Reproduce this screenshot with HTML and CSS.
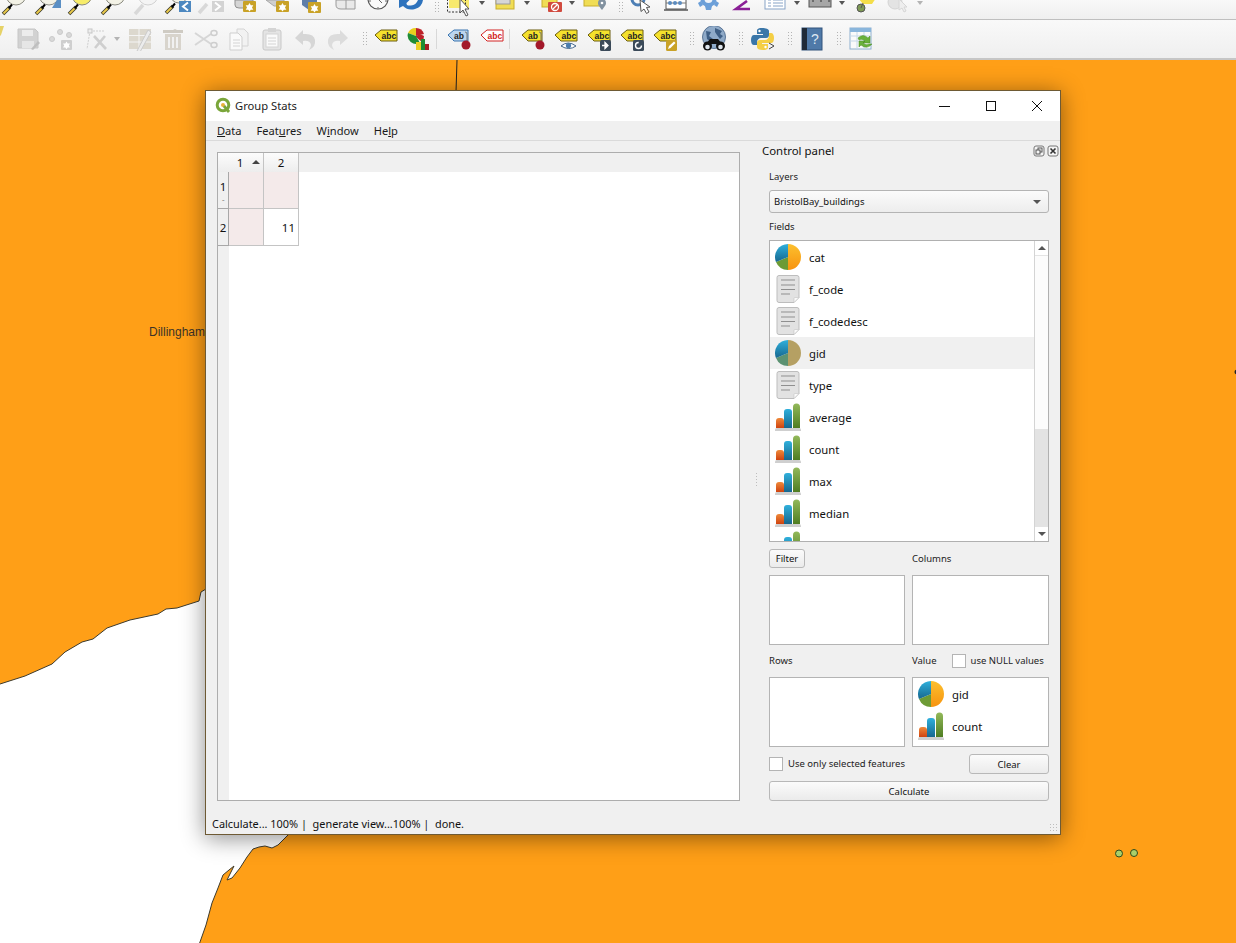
FILE: index.html
```html
<!DOCTYPE html>
<html lang="en">
<head>
  <meta charset="utf-8" />
  <title>Group Stats</title>
  <link rel="stylesheet" href="styles.css">
</head>
<body>
  <svg class="sprite" xmlns="http://www.w3.org/2000/svg">
    <defs>
      <linearGradient id="g-orange" x1="0" y1="0" x2="0" y2="1"><stop offset="0" stop-color="#fcc02e"/><stop offset="1" stop-color="#f7930f"/></linearGradient>
      <linearGradient id="g-blue" x1="0" y1="0" x2="0" y2="1"><stop offset="0" stop-color="#2fb0dc"/><stop offset="1" stop-color="#17678f"/></linearGradient>
      <linearGradient id="g-green" x1="0" y1="0" x2="0" y2="1"><stop offset="0" stop-color="#93b95a"/><stop offset="1" stop-color="#4f7d22"/></linearGradient>
      <linearGradient id="g-red" x1="0" y1="0" x2="0" y2="1"><stop offset="0" stop-color="#ef8a3a"/><stop offset="1" stop-color="#cf4310"/></linearGradient>
    </defs>

    <!-- field icons -->
    <symbol id="f-pie" viewBox="0 0 26 26">
      <path d="M13 0a13 13 0 0 1 0 26z" fill="url(#g-orange)"/>
      <path d="M13 13v13A13 13 0 0 1 1 18z" fill="#6d9b35"/>
      <path d="M13 13L1 18A13 13 0 0 1 13 0z" fill="url(#g-blue)"/>
    </symbol>
    <symbol id="f-pie-dim" viewBox="0 0 26 26">
      <path d="M13 0a13 13 0 0 1 0 26z" fill="#b5a063"/>
      <path d="M13 13v13A13 13 0 0 1 1 18z" fill="#5c9272"/>
      <path d="M13 13L1 18A13 13 0 0 1 13 0z" fill="url(#g-blue)"/>
    </symbol>
    <symbol id="f-doc" viewBox="0 0 26 28">
      <path d="M4 .5h18a2 2 0 0 1 2 2v20l-5 5H4a2 2 0 0 1-2-2v-23a2 2 0 0 1 2-2z" fill="#e2e2e2" stroke="#bdbdbd"/>
      <path d="M19 27.500v-4a1 1 0 0 1 1-1h4z" fill="#fafafa" stroke="#c4c4c4" stroke-width=".6"/>
      <path d="M6 5h14M6 10h14M6 14.500h14M6 19h9" stroke="#8f8f8f" stroke-width="1"/>
    </symbol>
    <symbol id="f-bars" viewBox="0 0 26 28">
      <path d="M0 27a2 2 0 0 1 2-2h22a2 2 0 0 1 2 2v1H0z" fill="#cfcfcf"/>
      <path d="M1 25v-7a3 3 0 0 1 3-3h2a3 3 0 0 1 3 3v7z" fill="url(#g-red)"/>
      <path d="M9 25V9a3 3 0 0 1 3-3h2a3 3 0 0 1 3 3v16z" fill="url(#g-blue)"/>
      <path d="M18 25V4a3.500 3.500 0 0 1 7 0v21z" fill="url(#g-green)"/>
    </symbol>

    <!-- first toolbar, only the bottom of each icon is on screen -->
    <symbol id="a-lens" viewBox="0 0 33 19">
      <circle cx="18" cy="-5" r="10" fill="#f3f2e6" stroke="#8a8a80"/>
      <path d="M5 14l7-7" stroke="#3a3a2a" stroke-width="3.500"/><path d="M5.500 13.500l5-5" stroke="#e9c94c" stroke-width="2"/>
      <path d="M11 8l3-3.500" stroke="#000" stroke-width="2"/>
    </symbol>
    <symbol id="a-lens-y" viewBox="0 0 33 19">
      <circle cx="18" cy="-5" r="10" fill="#f7ec6a" stroke="#8a8a80"/>
      <path d="M5 14l7-7" stroke="#3a3a2a" stroke-width="3.500"/><path d="M5.500 13.500l5-5" stroke="#e9c94c" stroke-width="2"/>
      <path d="M11 8l3-3.500" stroke="#000" stroke-width="2"/>
    </symbol>
    <symbol id="a-lens-box" viewBox="0 0 33 19">
      <circle cx="18" cy="-5" r="10" fill="#f3f2e6" stroke="#8a8a80"/>
      <path d="M5 14l7-7" stroke="#3a3a2a" stroke-width="3.500"/><path d="M5.500 13.500l5-5" stroke="#e9c94c" stroke-width="2"/>
      <path d="M11 8l3-3.500" stroke="#000" stroke-width="2"/>
      <path d="M21 8l5-8h4v8z" fill="#5b8fc4"/>
    </symbol>
    <symbol id="a-lens-off" viewBox="0 0 33 19">
      <circle cx="18" cy="-5" r="10" fill="#f4f4f4" stroke="#d2d2d2"/>
      <path d="M5 14l8-9" stroke="#d8d8d8" stroke-width="3.500"/>
    </symbol>
    <symbol id="a-lens-prev" viewBox="0 0 33 19">
      <circle cx="16" cy="-6" r="9" fill="#f3f2e6" stroke="#8a8a80"/>
      <path d="M3 13l7-7" stroke="#3a3a2a" stroke-width="3.500"/><path d="M3.500 12.500l5-5" stroke="#e9c94c" stroke-width="2"/>
      <path d="M9 7l3-3.500" stroke="#000" stroke-width="2"/>
      <rect x="16" y="1" width="12" height="11" fill="#4d88c0"/>
      <path d="M25 2.500l-5 4 5 4" fill="none" stroke="#fff" stroke-width="2"/>
    </symbol>
    <symbol id="a-lens-next" viewBox="0 0 33 19">
      <path d="M3 13l8-9" stroke="#d8d8d8" stroke-width="3.500"/>
      <rect x="16" y="1" width="12" height="11" fill="#d3d3d3"/>
      <path d="M19 2.500l5 4-5 4" fill="none" stroke="#fff" stroke-width="2"/>
    </symbol>
    <symbol id="a-sheet-star" viewBox="0 0 33 19">
      <path d="M6 0v5q0 3 4 3h14V0z" fill="#d5d5d5" stroke="#8f8f8f"/>
      <rect x="14" y="1" width="13" height="11" rx="1" fill="#c9a227"/>
      <path d="M20.500 3l1.300 2.300h2.500l-1.300 2.200 1.300 2.200h-2.500l-1.300 1.800-1.300-1.800h-2.500l1.300-2.200-1.300-2.200h2.500z" fill="#fff"/>
    </symbol>
    <symbol id="a-map-star" viewBox="0 0 33 19">
      <path d="M4 0l8 6h10V0z" fill="#cfcfcf" stroke="#a8a8a8"/>
      <rect x="14" y="1" width="13" height="11" rx="1" fill="#c9a227"/>
      <path d="M20.500 3l1.300 2.300h2.500l-1.300 2.200 1.300 2.200h-2.500l-1.300 1.800-1.300-1.800h-2.500l1.300-2.200-1.300-2.200h2.500z" fill="#fff"/>
    </symbol>
    <symbol id="a-blue-star" viewBox="0 0 33 19">
      <path d="M7 0v5l7 5 8-2V0z" fill="#5f7ea8"/>
      <rect x="13" y="2" width="13" height="11" rx="1" fill="#c9a227"/>
      <path d="M19.500 4l1.300 2.300h2.500l-1.300 2.200 1.300 2.200h-2.500l-1.300 1.800-1.300-1.800h-2.500l1.300-2.200-1.300-2.200h2.500z" fill="#fff"/>
    </symbol>
    <symbol id="a-scroll" viewBox="0 0 33 19">
      <path d="M8 0v5q0 4 5 4h14V0z" fill="#e9e9e9" stroke="#9a9a9a"/><path d="M18 0v9" stroke="#9a9a9a"/>
    </symbol>
    <symbol id="a-clock" viewBox="0 0 33 19">
      <circle cx="17" cy="-1" r="10" fill="#fafafa" stroke="#555" stroke-width="1.200"/>
      <path d="M17 -1l4 4M8 1l2 0M24 1l2 0M17 7v1.500" stroke="#666"/>
    </symbol>
    <symbol id="a-refresh" viewBox="0 0 33 19">
      <path d="M5 0v8l4-2q5 5 12 3t8-9h-5q-2 5-7 5.500t-4.500-2.500l3-3z" fill="#2e73bd"/>
    </symbol>
    <symbol id="a-select" viewBox="0 0 33 19">
      <rect x="6" y="-6" width="20" height="14" fill="#f7e96e"/><rect x="4.500" y="-4" width="18" height="16" fill="none" stroke="#333" stroke-dasharray="2 1.500"/>
      <path d="M17 -1l9 10-4 0 3 6-2 1-3-6-3 3z" fill="#fff" stroke="#555"/>
    </symbol>
    <symbol id="a-select-form" viewBox="0 0 33 19">
      <rect x="8" y="-6" width="18" height="15" fill="#f0dd55" stroke="#c8ad2c"/>
      <rect x="8" y="-3" width="14" height="7" fill="#d6d6d6" stroke="#9a9a9a"/>
    </symbol>
    <symbol id="a-select-no" viewBox="0 0 33 19">
      <rect x="9" y="-5" width="15" height="12" fill="#f0dd55" stroke="#c8ad2c"/>
      <rect x="15" y="2" width="14" height="10" rx="1" fill="#d14a3e"/>
      <circle cx="22" cy="7" r="3.500" fill="none" stroke="#fff" stroke-width="1.300"/><path d="M19.500 9.500l5-5" stroke="#fff" stroke-width="1.300"/>
    </symbol>
    <symbol id="a-select-pin" viewBox="0 0 33 19">
      <rect x="6" y="-6" width="18" height="12" fill="#f0dd55" stroke="#c8ad2c"/>
      <path d="M24 10c-3-4-4-5-4-7a4 4 0 0 1 8 0c0 2-1 3-4 7z" fill="#8292a0"/><circle cx="24" cy="3" r="1.300" fill="#fff"/>
    </symbol>
    <symbol id="a-identify" viewBox="0 0 33 19">
      <circle cx="12" cy="-1" r="6" fill="none" stroke="#4d7fb5" stroke-width="3"/>
      <path d="M14 0l10 7-3.500 .5 2.500 4.500-2.500 1.500-2.500-4.500-3 2.500z" fill="#fff" stroke="#555"/>
    </symbol>
    <symbol id="a-abacus" viewBox="0 0 33 19">
      <path d="M7 -6h20v15H7z" fill="#fff" stroke="#555"/><path d="M5 10h24" stroke="#555" stroke-width="1.500"/>
      <path d="M7 3h20" stroke="#777"/>
      <g fill="#5b8cc0"><circle cx="11" cy="3" r="2"/><circle cx="16" cy="3" r="2"/><circle cx="21" cy="3" r="2"/></g>
    </symbol>
    <symbol id="a-gear" viewBox="0 0 33 19">
      <circle cx="16.500" cy="-1" r="8" fill="#6b9fd8"/>
      <path d="M6 3l3-2 2 4-3 2zM27 3l-3-2-2 4 3 2zM13 6h7l-1 4h-5z" fill="#6b9fd8"/>
      <circle cx="16.500" cy="-1" r="4" fill="#eef3f9"/>
    </symbol>
    <symbol id="a-sigma" viewBox="0 0 33 19">
      <path d="M22 1L11 9h14" fill="none" stroke="#8a1f96" stroke-width="2.600"/>
    </symbol>
    <symbol id="a-table" viewBox="0 0 33 19">
      <rect x="7" y="-4" width="20" height="13" fill="#fff" stroke="#87a3c6"/>
      <path d="M10 0h3M15 0h10M10 3h3M15 3h10M10 6h3M15 6h10" stroke="#87a3c6"/>
    </symbol>
    <symbol id="a-ruler" viewBox="0 0 33 19">
      <rect x="6" y="-3" width="22" height="10" fill="#a7a7a7" stroke="#555"/>
      <path d="M10 -3v5M14 -3v3M18 -3v5M22 -3v3M26 -3v5" stroke="#333"/>
    </symbol>
    <symbol id="a-tip" viewBox="0 0 33 19">
      <path d="M10 -2h18l-4 6H15z" fill="#f4de4a"/>
      <circle cx="13" cy="8" r="4" fill="#7e9a55" stroke="#555"/><path d="M13 8l2 -5" stroke="#555"/>
    </symbol>
    <symbol id="a-gear-off" viewBox="0 0 33 19">
      <circle cx="14" cy="2" r="7" fill="#e3e3e3" stroke="#d4d4d4"/>
      <path d="M18 -1l8 8-3 0 2 4-2 1-2-4-3 2z" fill="#eee" stroke="#d6d6d6"/>
    </symbol>

    <!-- second toolbar -->
    <symbol id="b-save" viewBox="0 0 24 24">
      <path d="M2 2h17l3 3v16H2z" fill="#d2d2d2" stroke="#c6c6c6"/>
      <rect x="6" y="3" width="11" height="6" fill="#ececec"/><rect x="6" y="14" width="12" height="7" fill="#e6e6e6"/>
      <path d="M15 22l7-8 2 2-7 7z" fill="#bfbfbf"/>
    </symbol>
    <symbol id="b-points" viewBox="0 0 24 24">
      <g fill="#d9d9d9" stroke="#cacaca"><circle cx="3" cy="12" r="2.500"/><circle cx="11" cy="5" r="2.500"/><circle cx="20" cy="8" r="2.500"/></g>
      <rect x="12" y="13" width="11" height="10" rx="1" fill="#cfcfcf"/>
      <path d="M17.500 14.500l1.200 2h2.300l-1.200 2 1.200 2h-2.300l-1.200 1.700-1.200-1.700h-2.300l1.200-2-1.200-2h2.300z" fill="#fff"/>
    </symbol>
    <symbol id="b-tool" viewBox="0 0 24 24">
      <path d="M5 4h15M5 4l-3 18" stroke="#cfcfcf" fill="none" stroke-dasharray="2 1"/>
      <rect x="3" y="2" width="4" height="4" fill="#eee" stroke="#c6c6c6"/>
      <path d="M9 9l12 13M20 9L10 21" stroke="#cfcfcf" stroke-width="2.600"/>
    </symbol>
    <symbol id="b-tabledit" viewBox="0 0 24 24">
      <path d="M1 2h22v20H1z" fill="#dcd8ce"/>
      <path d="M1 8.500h22M1 15h22M11 2v20" stroke="#f4f4f4"/>
      <path d="M9 24l11-21 3 2-11 20z" fill="#ececec" stroke="#cbcbcb"/>
    </symbol>
    <symbol id="b-trash" viewBox="0 0 24 24">
      <path d="M2 3h10l2-1 2 1h6v3H2z" fill="#cfcbc3"/>
      <path d="M4 7h16v16H4z" fill="#d8d4cc"/><path d="M8 10v11M12 10v11M16 10v11" stroke="#f1f1f1" stroke-width="2"/>
    </symbol>
    <symbol id="b-cut" viewBox="0 0 24 24">
      <path d="M1 6l16 11M1 18L17 7" stroke="#d6d6d6" stroke-width="2"/>
      <g fill="none" stroke="#cecece" stroke-width="1.500"><ellipse cx="20" cy="6" rx="3" ry="2.500"/><ellipse cx="20" cy="18" rx="3" ry="2.500"/></g>
    </symbol>
    <symbol id="b-copy" viewBox="0 0 24 24">
      <path d="M10 2h7l4 4v13H10z" fill="#f2f2f2" stroke="#d4d4d4"/>
      <path d="M3 6h8l4 4v13H3z" fill="#fafafa" stroke="#cfcfcf"/>
      <path d="M6 13h7M6 16h7M6 19h7" stroke="#d4d4d4"/>
    </symbol>
    <symbol id="b-paste" viewBox="0 0 24 24">
      <rect x="3" y="3" width="18" height="20" rx="2" fill="#e4e4e4" stroke="#c8c8c8"/>
      <rect x="8" y="1" width="8" height="4" fill="#d4d4d4"/>
      <rect x="6" y="7" width="12" height="13" fill="#fafafa" stroke="#d4d4d4"/>
      <path d="M8 11h8M8 14h8M8 17h8" stroke="#d4d4d4"/>
    </symbol>
    <symbol id="b-undo" viewBox="0 0 24 24">
      <path d="M10 3L2 11l8 7v-4q7-1 8 4 0 2-2 5 7-3 6-10t-12-6z" fill="#d6d6d6"/>
    </symbol>
    <symbol id="b-redo" viewBox="0 0 24 24">
      <path d="M14 3l8 8-8 7v-4q-7-1-8 4 0 2 2 5-7-3-6-10t12-6z" fill="#dcdcdc"/>
    </symbol>
    <symbol id="tag-y" viewBox="0 0 24 24">
      <path d="M1 8l6-5h16v11H7z" fill="#f5e12c" stroke="#6a5c10"/>
    </symbol>
    <symbol id="tag-r" viewBox="0 0 24 24">
      <path d="M1 8l6-5h16v11H7z" fill="#fff" stroke="#d22222"/>
    </symbol>
    <symbol id="b-diagram" viewBox="0 0 24 24">
      <path d="M9 9a8 8 0 0 1 8 0l-1 7-7-6z" fill="#bd2229"/>
      <path d="M9 9V1a8.500 8.500 0 0 1 8 6z" fill="#bd2229"/>
      <path d="M1 6a8.500 8.500 0 0 1 8-5v8z" fill="#e8cf1f"/>
      <path d="M1 6l8 3 4 7A8.500 8.500 0 0 1 1 6z" fill="#1f8c35"/>
      <rect x="9" y="15" width="5" height="8" fill="#ecd024"/><rect x="14" y="12" width="4" height="11" fill="#1f8c35"/><rect x="18" y="17" width="4" height="6" fill="#a61e24"/>
    </symbol>
    <symbol id="b-pin-blue" viewBox="0 0 24 24">
      <path d="M1 8l6-5h14v11H7z" fill="#bcd5ee" stroke="#3a75b0"/>
    </symbol>
    <symbol id="b-pin-yellow" viewBox="0 0 24 24">
      <path d="M1 8l6-5h14v11H7z" fill="#f5e12c" stroke="#6a5c10"/>
    </symbol>
    <symbol id="b-pin-head" viewBox="0 0 24 24">
      <path d="M18 5a2 2 0 0 1 2 2v8" fill="none" stroke="#777"/>
      <circle cx="19" cy="18" r="4.500" fill="#a3192b"/>
    </symbol>
    <symbol id="b-eye" viewBox="0 0 24 24">
      <path d="M7 19q7-6 15 0q-7 5-15 0z" fill="#fff" stroke="#42668c"/>
      <circle cx="14.500" cy="18.500" r="2.600" fill="#4a7cae"/>
    </symbol>
    <symbol id="b-move" viewBox="0 0 24 24">
      <rect x="13" y="13" width="11" height="11" rx="1.500" fill="#3b4a59"/>
      <path d="M15 18.500h4M18 15.500l3 3-3 3z" stroke="#fff" fill="#fff" stroke-width="1.300"/>
    </symbol>
    <symbol id="b-rotate" viewBox="0 0 24 24">
      <rect x="13" y="13" width="11" height="11" rx="1.500" fill="#3b4a59"/>
      <circle cx="18.500" cy="18.500" r="3" fill="none" stroke="#fff" stroke-width="1.400" stroke-dasharray="14 5"/>
    </symbol>
    <symbol id="b-pencil" viewBox="0 0 24 24">
      <rect x="13" y="13" width="11" height="11" rx="1.500" fill="#c9a227"/>
      <path d="M15 22l1-3 5-4.500 1.500 1.500-5 5z" fill="#fff"/>
    </symbol>
    <symbol id="b-globe" viewBox="0 0 26 26">
      <circle cx="13" cy="11" r="11.500" fill="#8faac8" stroke="#5b7696"/>
      <path d="M5 5l5 1-2 4 4 3-2 3-4-3zM14 2l7 3-2 3 3 2-3 3-3-4-2-3z" fill="#3f5f85"/>
      <circle cx="6.500" cy="20" r="4.500" fill="#111"/><circle cx="19.500" cy="20" r="4.500" fill="#111"/>
      <path d="M5 18l4-5h8l4 5z" fill="#111"/>
      <circle cx="6.500" cy="21" r="2.300" fill="#dfe6ee"/><circle cx="19.500" cy="21" r="2.300" fill="#dfe6ee"/>
    </symbol>
    <symbol id="b-python" viewBox="0 0 24 24">
      <path d="M11 1c-5 0-5 2-5 3v3h6v1H3c-2 0-3 2-3 5s1 5 3 5h3v-3c0-2 2-4 4-4h5c2 0 3-1 3-3V4c0-2-3-3-7-3z" fill="#3a76a8"/>
      <path d="M12 23c5 0 5-2 5-3v-3h-6v-1h9c2 0 3-2 3-5s-1-5-3-5h-2v3c0 2-2 4-4 4H9c-2 0-3 1-3 3v4c0 2 2 3 6 3z" fill="#f4cf45"/>
      <circle cx="8.500" cy="4" r="1.200" fill="#fff"/><circle cx="14.500" cy="20" r="1.200" fill="#fff"/>
      <path d="M18 16l5 3-5 3" fill="none" stroke="#444"/>
    </symbol>
    <symbol id="b-help" viewBox="0 0 24 24">
      <rect x="2" y="1" width="20" height="22" fill="#4f79a8" stroke="#32557c"/>
      <rect x="2" y="1" width="5" height="22" fill="#1f2a38"/>
    </symbol>
    <symbol id="b-refresh" viewBox="0 0 24 24">
      <rect x="1" y="1" width="21" height="21" fill="#fafafa" stroke="#8eb0cf"/>
      <rect x="1" y="1" width="21" height="4" fill="#8ab6dc"/>
      <path d="M1 9h21M1 14h21M8 5v17M15 5v17" stroke="#c6d8e8"/>
      <path d="M9 11q5-5 10 0l2-2v7h-7l2-2q-3-3-6-1zM23 17q-5 6-11 1l-2 2v-6h6l-2 2q3 3 6 1z" fill="#69b13b" stroke="#4a8a25" stroke-width=".5"/>
    </symbol>
  </svg>

  <div class="toolbar toolbar-top">
    <svg class="btn33"><use href="#a-lens"/></svg>
    <svg class="btn33"><use href="#a-lens-box"/></svg>
    <svg class="btn33"><use href="#a-lens-y"/></svg>
    <svg class="btn33"><use href="#a-lens"/></svg>
    <svg class="btn33"><use href="#a-lens-off"/></svg>
    <svg class="btn33"><use href="#a-lens-prev"/></svg>
    <svg class="btn33"><use href="#a-lens-next"/></svg>
    <svg class="btn33"><use href="#a-sheet-star"/></svg>
    <svg class="btn33"><use href="#a-map-star"/></svg>
    <svg class="btn33"><use href="#a-blue-star"/></svg>
    <svg class="btn33"><use href="#a-scroll"/></svg>
    <svg class="btn33"><use href="#a-clock"/></svg>
    <svg class="btn33"><use href="#a-refresh"/></svg>
    <span class="grip grip-16"></span>
    <svg class="btn33"><use href="#a-select"/></svg><span class="drop"></span>
    <svg class="btn33"><use href="#a-select-form"/></svg><span class="drop"></span>
    <svg class="btn33"><use href="#a-select-no"/></svg><span class="drop"></span>
    <svg class="btn33"><use href="#a-select-pin"/></svg>
    <span class="grip grip-15"></span>
    <svg class="btn33"><use href="#a-identify"/></svg>
    <svg class="btn33"><use href="#a-abacus"/></svg>
    <svg class="btn33"><use href="#a-gear"/></svg>
    <svg class="btn33"><use href="#a-sigma"/></svg>
    <svg class="btn33"><use href="#a-table"/></svg><span class="drop"></span>
    <svg class="btn33"><use href="#a-ruler"/></svg><span class="drop"></span>
    <svg class="btn33"><use href="#a-tip"/></svg>
    <svg class="btn33"><use href="#a-gear-off"/></svg><span class="drop drop-off"></span>
  </div>

  <div class="toolbar toolbar-main">
    <svg class="pencil-tail" viewBox="0 0 4 10"><path d="M0 0h4L1 9 0 10z" fill="#e6d267"/></svg>
    <span class="tb"><svg class="ic"><use href="#b-save"/></svg></span>
    <span class="tb"><svg class="ic"><use href="#b-points"/></svg></span>
    <span class="tb tb-menu"><svg class="ic"><use href="#b-tool"/></svg></span><span class="drop drop-off drop-10"></span>
    <span class="tb"><svg class="ic"><use href="#b-tabledit"/></svg></span>
    <span class="tb"><svg class="ic"><use href="#b-trash"/></svg></span>
    <span class="tb"><svg class="ic"><use href="#b-cut"/></svg></span>
    <span class="tb"><svg class="ic"><use href="#b-copy"/></svg></span>
    <span class="tb"><svg class="ic"><use href="#b-paste"/></svg></span>
    <span class="tb"><svg class="ic"><use href="#b-undo"/></svg></span>
    <span class="tb"><svg class="ic"><use href="#b-redo"/></svg></span>
    <span class="grip grip-15"></span>
    <span class="tb"><svg class="ic"><use href="#tag-y"/><text x="7.500" y="12" class="tag-text">abc</text></svg></span>
    <span class="tb"><svg class="ic"><use href="#b-diagram"/></svg></span>
    <span class="vsep vsep-7"></span>
    <span class="tb"><svg class="ic"><use href="#b-pin-blue"/><text x="7" y="12" class="tag-text">ab</text><use href="#b-pin-head"/></svg></span>
    <span class="tb"><svg class="ic"><use href="#tag-r"/><text x="7.500" y="12" class="tag-text tag-red">abc</text></svg></span>
    <span class="vsep vsep-8"></span>
    <span class="tb"><svg class="ic"><use href="#b-pin-yellow"/><text x="7" y="12" class="tag-text">ab</text><use href="#b-pin-head"/></svg></span>
    <span class="tb"><svg class="ic"><use href="#tag-y"/><text x="7.500" y="12" class="tag-text">abc</text><use href="#b-eye"/></svg></span>
    <span class="tb"><svg class="ic"><use href="#tag-y"/><text x="7.500" y="12" class="tag-text">abc</text><use href="#b-move"/></svg></span>
    <span class="tb"><svg class="ic"><use href="#tag-y"/><text x="7.500" y="12" class="tag-text">abc</text><use href="#b-rotate"/></svg></span>
    <span class="tb"><svg class="ic"><use href="#tag-y"/><text x="7.500" y="12" class="tag-text">abc</text><use href="#b-pencil"/></svg></span>
    <span class="grip grip-16"></span>
    <span class="tb"><svg class="ic ic-26"><use href="#b-globe"/></svg></span>
    <span class="grip grip-16"></span>
    <span class="tb"><svg class="ic"><use href="#b-python"/></svg></span>
    <span class="grip grip-16"></span>
    <span class="tb"><svg class="ic"><use href="#b-help"/><text x="15" y="17" class="help-text">?</text></svg></span>
    <span class="grip grip-16"></span>
    <span class="tb"><svg class="ic"><use href="#b-refresh"/></svg></span>
  </div>

  <div class="desktop">
    <svg class="map" viewBox="0 60 1236 883">
      <path class="land" d="M-5 50H1246V953H196L200 942 206 925 212 903 218 888 223 875 229 870 234 866 231 872 227 880 232 878 240 868 247 857 253 849 259 847 265 846 272 848 278 845 288 835 400 700 300 620 206 589 201 592 199 601 177 608 166 609 158 614 130 620 107 628 93 639 82 642 65 652 52 664 25 676 0 684 -5 685Z"/>
      <path class="road" d="M457 60L456 92"/>
      <circle class="pt" cx="1119" cy="853.500" r="3.500"/>
      <circle class="pt" cx="1134" cy="853" r="3.500"/>
      <circle class="edge-dot" cx="1237" cy="372" r="2.500"/>
    </svg>
    <span class="place">Dillingham</span>

    <div class="window">
      <div class="titlebar">
        <svg class="qgis" viewBox="0 0 16 16">
          <circle cx="8" cy="8" r="5.800" fill="none" stroke="#7aa63a" stroke-width="3"/>
          <circle cx="8" cy="8" r="2" fill="#e8b23a"/>
          <path d="M9 9l5 6" stroke="#7aa63a" stroke-width="2.800"/>
        </svg>
        <span class="title">Group Stats</span>
        <div class="winbtns">
          <svg viewBox="0 0 46 30"><path d="M17 15.500h11" stroke="#111"/></svg>
          <svg viewBox="0 0 46 30"><rect x="18.500" y="10.500" width="9" height="9" fill="none" stroke="#111"/></svg>
          <svg viewBox="0 0 46 30"><path d="M18 10l10 10M28 10L18 20" stroke="#111"/></svg>
        </div>
      </div>
      <div class="menubar">
        <span><u>D</u>ata</span>
        <span>Feat<u>u</u>res</span>
        <span>W<u>i</u>ndow</span>
        <span>He<u>l</u>p</span>
      </div>

      <div class="content">
        <div class="table">
          <div class="th corner"></div>
          <div class="th col col-sorted">1<i class="sort"></i></div>
          <div class="th col">2</div>
          <div class="th-rest"></div>

          <div class="rh rh-1">1<small>-</small></div>
          <div class="cell pink"></div>
          <div class="cell pink"></div>
          <div class="blank"></div>

          <div class="rh">2</div>
          <div class="cell pink"></div>
          <div class="cell num">11</div>
          <div class="blank"></div>

          <div class="rh-rest"></div>
          <div class="blank blank-wide"></div>
        </div>

        <div class="splitter"></div>

        <aside class="panel">
          <div class="panel-head">
            <span>Control panel</span>
            <svg class="dock" viewBox="0 0 26 12">
              <rect x="1" y="1" width="10" height="10" rx="2" fill="#f4f4f4" stroke="#777"/>
              <rect x="5" y="3" width="4" height="4" fill="none" stroke="#555"/><rect x="3" y="5" width="4" height="4" fill="#f4f4f4" stroke="#555"/>
              <rect x="15" y="1" width="10" height="10" rx="2" fill="#f4f4f4" stroke="#777"/>
              <path d="M17.500 3.500l5 5M22.500 3.500l-5 5" stroke="#333" stroke-width="1.600"/>
            </svg>
          </div>
          <div class="body">
            <label class="lbl lbl-first">Layers</label>
            <div class="combo">BristolBay_buildings<i class="combo-arrow"></i></div>
            <label class="lbl lbl-fields">Fields</label>
            <div class="fields">
              <ul class="field-list">
                <li><svg class="fi"><use href="#f-pie"/></svg>cat</li>
                <li><svg class="fi"><use href="#f-doc"/></svg>f_code</li>
                <li><svg class="fi"><use href="#f-doc"/></svg>f_codedesc</li>
                <li class="current"><svg class="fi"><use href="#f-pie-dim"/></svg>gid</li>
                <li><svg class="fi"><use href="#f-doc"/></svg>type</li>
                <li><svg class="fi"><use href="#f-bars"/></svg>average</li>
                <li><svg class="fi"><use href="#f-bars"/></svg>count</li>
                <li><svg class="fi"><use href="#f-bars"/></svg>max</li>
                <li><svg class="fi"><use href="#f-bars"/></svg>median</li>
                <li><svg class="fi"><use href="#f-bars"/></svg></li>
              </ul>
              <div class="scrollbar">
                <div class="sb-btn"><i class="up"></i></div>
                <div class="sb-thumb"></div>
                <div class="sb-track"></div>
                <div class="sb-btn"><i class="down"></i></div>
              </div>
            </div>

            <div class="two filter-row">
              <div><button class="btn btn-filter">Filter</button></div>
              <label class="lbl">Columns</label>
            </div>
            <div class="two boxes">
              <div class="box"></div>
              <div class="box"></div>
            </div>
            <div class="two value-row">
              <label class="lbl">Rows</label>
              <div class="value-head">
                <label class="lbl">Value</label>
                <span class="check"></span>
                <label class="lbl">use NULL values</label>
              </div>
            </div>
            <div class="two boxes boxes-2">
              <div class="box"></div>
              <ul class="box field-list">
                <li><svg class="fi"><use href="#f-pie"/></svg>gid</li>
                <li><svg class="fi"><use href="#f-bars"/></svg>count</li>
              </ul>
            </div>
            <div class="bottom-row">
              <span class="check"></span>
              <label class="lbl only">Use only selected features</label>
              <button class="btn btn-clear">Clear</button>
            </div>
            <button class="btn btn-calc">Calculate</button>
          </div>
        </aside>
      </div>

      <div class="statusbar">
        <span>Calculate... 100% |&nbsp; generate view...100% |&nbsp; done.</span>
        <i class="size-grip"></i>
      </div>
    </div>
  </div>
</body>
</html>
```

FILE: styles.css
```css
html,
body {
  margin: 0;
  padding: 0;
  height: 100%;
  overflow: hidden;
  font-family: 'Noto Sans', 'Open Sans', sans-serif;
  background: #fff;
}

.sprite {
  display: block;
  width: 0;
  height: 0;
}

.tag-text {
  font: bold 8.5px 'Liberation Sans', sans-serif;
  fill: #222;
}

.tag-red {
  fill: #d22222;
}

.help-text {
  font: 14px 'Liberation Sans', sans-serif;
  fill: #dfe8f2;
  text-anchor: middle;
}

/* toolbars */
.toolbar {
  display: flex;
  align-items: center;
  box-sizing: border-box;
  background: linear-gradient(#f9f9f9, #efefef);
}

.toolbar-top {
  height: 20px;
  padding-left: 0;
  margin-left: -2px;
  border-bottom: 1px solid #bfbfbf;
  align-items: flex-start;
}

.toolbar-main {
  height: 40px;
  padding-left: 11.5px;
  border-bottom: 2px solid #c6c6c6;
  position: relative;
}

.btn33 {
  flex: none;
  width: 33px;
  height: 19px;
}

.tb {
  flex: none;
  display: flex;
  align-items: center;
  justify-content: center;
  width: 33px;
  height: 38px;
}

.tb-menu {
  margin-left: 3px;
}

.ic {
  width: 24px;
  height: 24px;
}

.ic-26 {
  width: 26px;
  height: 26px;
}

.pencil-tail {
  position: absolute;
  left: 0;
  top: 6px;
  width: 4px;
  height: 10px;
}

.drop {
  flex: none;
  display: block;
  width: 12px;
  height: 19px;
  position: relative;
}

.drop::after {
  content: "";
  position: absolute;
  left: 3px;
  top: 1px;
  border: 3.5px solid transparent;
  border-top: 4px solid #555;
}

.drop-off::after {
  border-top-color: #b4b4b4;
}

.drop-10 {
  width: 10px;
  height: 38px;
}

.drop-10::after {
  top: 17px;
  left: 0;
}

.grip {
  flex: none;
  display: block;
  height: 16px;
  background-image: radial-gradient(circle, #b4b4b4 .8px, transparent 1px);
  background-size: 3px 3px;
  background-repeat: repeat;
  background-origin: content-box;
  background-clip: content-box;
  box-sizing: border-box;
}

.grip-16 {
  width: 16px;
  padding: 0 3px 0 7px;
}

.grip-15 {
  width: 15px;
  padding: 0 2px 0 7px;
}

.toolbar-top .grip {
  height: 12px;
  margin-top: 1px;
}

.vsep {
  flex: none;
  height: 20px;
  border-left: 1px solid #d8d8d8;
  box-sizing: border-box;
}

.vsep-7 {
  width: 7px;
  margin-left: 0;
  padding-left: 3px;
}

.vsep-8 {
  width: 8px;
}

/* map canvas */
.desktop {
  position: relative;
  height: 883px;
  overflow: hidden;
}

.map {
  display: block;
  width: 1236px;
  height: 883px;
}

.land {
  fill: #ff9f17;
  stroke: #3d3a2c;
  stroke-width: 1;
}

.road {
  fill: none;
  stroke: #222;
  stroke-width: 1;
}

.pt {
  fill: #a9cf6a;
  stroke: #2e4a1c;
  stroke-width: 1;
}

.edge-dot {
  fill: #222;
}

.place {
  position: absolute;
  left: 149px;
  top: 265px;
  font: 12px 'Liberation Sans', sans-serif;
  color: #3c3327;
}

/* group stats window */
.window {
  position: absolute;
  left: 205px;
  top: 30px;
  width: 856px;
  height: 745px;
  box-sizing: border-box;
  display: flex;
  flex-direction: column;
  background: #f0f0f0;
  border: 1px solid #6e5a34;
  box-shadow: 0 3px 22px rgba(0, 0, 0, .45);
  font-size: 11px;
  color: #111;
}

.titlebar {
  flex: none;
  display: flex;
  align-items: center;
  height: 30px;
  padding-left: 9px;
  background: #fff;
}

.qgis {
  width: 16px;
  height: 16px;
  margin-bottom: 2px;
}

.title {
  margin: 0 0 2px 4px;
  font-size: 11.2px;
  color: #222;
}

.winbtns {
  margin-left: auto;
  margin-right: 0;
  display: flex;
}

.winbtns svg {
  display: block;
  width: 46px;
  height: 30px;
}

.menubar {
  flex: none;
  display: flex;
  align-items: center;
  gap: 15px;
  height: 19px;
  padding-left: 11px;
  border-bottom: 1px solid #dadada;
  font-size: 11.1px;
  color: #1a1a1a;
}

.content {
  flex: 1;
  display: flex;
  min-height: 0;
}

/* result table */
.table {
  flex: none;
  display: grid;
  grid-template-columns: 11px 35px 35px 1fr;
  grid-template-rows: 19px 37px 37px 1fr;
  width: 523px;
  height: 649px;
  box-sizing: border-box;
  margin: 11px 0 0 11px;
  background: #fff;
  border: 1px solid #adadad;
  font-size: 11.5px;
}

.th {
  display: flex;
  align-items: center;
  justify-content: center;
  position: relative;
  box-sizing: border-box;
  background: linear-gradient(#fcfcfc, #ededed);
  border-right: 1px solid #c4c4c4;
}

.corner {
  border-right: 0;
}

.col-sorted {
  padding-right: 12px;
}

.th-rest {
  background: #f0f0f0;
}

.sort {
  position: absolute;
  right: 3px;
  top: 7px;
  border: 4px solid transparent;
  border-top: 0;
  border-bottom: 4px solid #444;
}

.rh {
  display: flex;
  align-items: center;
  justify-content: center;
  position: relative;
  box-sizing: border-box;
  background: #f0f0f0;
  border-right: 1px solid #a8a8a8;
  border-bottom: 1px solid #a8a8a8;
}

.rh-1 {
  padding-bottom: 8px;
}

.rh small {
  position: absolute;
  left: 4px;
  bottom: 4px;
  font-size: 8px;
  line-height: 8px;
  color: #888;
}

.rh-rest {
  background: #f0f0f0;
}

.cell {
  box-sizing: border-box;
  border-right: 1px solid #c4c4c4;
  border-bottom: 1px solid #c4c4c4;
}

.pink {
  background: #f4eaea;
}

.num {
  display: flex;
  align-items: center;
  justify-content: flex-end;
  padding-right: 3px;
  background: #fff;
}

.blank-wide {
  grid-column: 2 / 5;
}

.splitter {
  flex: none;
  width: 22px;
  background-image: radial-gradient(circle, #bdbdbd .7px, transparent 1px);
  background-size: 3px 3px;
  background-repeat: repeat;
  background-origin: content-box;
  background-clip: content-box;
  box-sizing: border-box;
  height: 16px;
  margin-top: 331px;
  padding: 0 5px 0 15px;
}

/* control panel */
.panel {
  flex: none;
  width: 298px;
  display: flex;
  flex-direction: column;
}

.panel-head {
  display: flex;
  align-items: center;
  justify-content: space-between;
  height: 20px;
  padding-right: 1px;
  font-size: 11.4px;
}

.panel-head span {
  margin-bottom: 1px;
}

.dock {
  width: 26px;
  height: 12px;
  margin-bottom: 1px;
}

.body {
  display: flex;
  flex-direction: column;
  width: 280px;
  margin-left: 7px;
}

.lbl {
  display: block;
  height: 14px;
  line-height: 14px;
  font-size: 9.5px;
  color: #222;
  white-space: nowrap;
}

.lbl-first {
  margin-top: 9px;
}

.lbl-fields {
  margin-top: 7px;
}

.combo {
  display: flex;
  align-items: center;
  justify-content: space-between;
  box-sizing: border-box;
  height: 23px;
  margin-top: 6px;
  padding: 0 5px 0 4px;
  font-size: 9.5px;
  background: linear-gradient(#fbfbfb, #ededed);
  border: 1px solid #b4b4b4;
  border-radius: 3px;
}

.combo-arrow {
  margin-right: 2px;
  border: 4px solid transparent;
  border-bottom: 0;
  border-top: 4px solid #555;
}

.fields {
  display: flex;
  box-sizing: border-box;
  height: 302px;
  margin-top: 6px;
  background: #fff;
  border: 1px solid #b0b0b0;
  overflow: hidden;
}

.field-list {
  flex: 1;
  list-style: none;
  margin: 0;
  padding: 0;
  overflow: hidden;
  font-size: 11.3px;
}

.field-list li {
  display: flex;
  align-items: center;
  gap: 8px;
  height: 32px;
  padding-left: 5px;
}

.field-list .current {
  background: #f0f0f0;
}

.fi {
  flex: none;
  width: 26px;
  height: 28px;
}

.scrollbar {
  flex: none;
  display: flex;
  flex-direction: column;
  box-sizing: border-box;
  width: 14px;
  border-left: 1px solid #d4d4d4;
}

.sb-btn {
  flex: none;
  display: flex;
  align-items: center;
  justify-content: center;
  height: 14px;
  background: #fff;
}

.sb-btn .up {
  border: 4px solid transparent;
  border-top: 0;
  border-bottom: 4px solid #555;
}

.sb-btn .down {
  border: 4px solid transparent;
  border-bottom: 0;
  border-top: 4px solid #555;
}

.sb-thumb {
  flex: none;
  height: 174px;
  background: #fcfcfc;
  border-top: 1px solid #e4e4e4;
  box-sizing: border-box;
}

.sb-track {
  flex: 1;
  background: #e3e3e3;
}

.two {
  display: grid;
  grid-template-columns: 136px 137px;
  gap: 7px;
}

.filter-row {
  align-items: center;
  height: 19px;
  margin-top: 7px;
}

.value-row {
  align-items: center;
  height: 14px;
  margin-top: 9px;
}

.value-head {
  display: flex;
  align-items: center;
}

.value-head .check {
  margin: 0 5px 0 15px;
}

.boxes {
  height: 70px;
  margin-top: 7px;
}

.boxes-2 {
  margin-top: 9px;
}

.box {
  box-sizing: border-box;
  background: #fff;
  border: 1px solid #b4b4b4;
  margin: 0;
  padding: 0;
}

.check {
  flex: none;
  display: block;
  box-sizing: border-box;
  width: 14px;
  height: 14px;
  background: #fff;
  border: 1px solid #b4b4b4;
}

.btn {
  display: block;
  box-sizing: border-box;
  padding: 0;
  font-family: inherit;
  font-size: 9.5px;
  color: #111;
  background: linear-gradient(#fbfbfb, #ebebeb);
  border: 1px solid #b8b8b8;
  border-radius: 3px;
}

.btn-filter {
  width: 36px;
  height: 19px;
}

.bottom-row {
  display: flex;
  align-items: center;
  height: 20px;
  margin-top: 7px;
}

.only {
  margin-left: 5px;
}

.btn-clear {
  margin-left: auto;
  width: 80px;
  height: 20px;
}

.btn-calc {
  width: 280px;
  height: 20px;
  margin-top: 7px;
}

.statusbar {
  flex: none;
  display: flex;
  align-items: center;
  height: 21px;
  padding-left: 6px;
  position: relative;
  font-size: 10.9px;
}

.size-grip {
  position: absolute;
  right: 1px;
  bottom: 1px;
  width: 10px;
  height: 10px;
  background-image: radial-gradient(circle, #bdbdbd .7px, transparent 1px);
  background-size: 3px 3px;
}
```
